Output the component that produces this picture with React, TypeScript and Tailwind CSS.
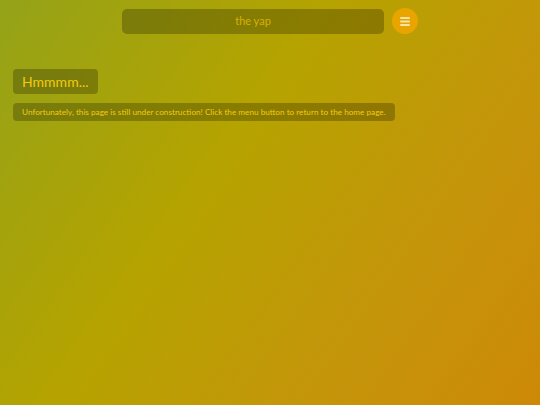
export default function App() {
  return (
    <div
      className="w-[540px] h-[405px] overflow-hidden bg-[linear-gradient(125deg,#94a318_0%,#b5a300_40%,#c4960a_70%,#cd8906_100%)]"
      style={{ fontFamily: '"Lato", "Noto Sans", sans-serif' }}
    >
      {/* Top bar */}
      <div className="flex items-center pt-[8px] pl-[122px] gap-[8px]">
        <div className="w-[262px] h-[25px] rounded-[5px] bg-[#0000003d] flex items-center justify-center text-[11px] text-[#d9b000]">
          the yap
        </div>
        <button className="w-[26px] h-[26px] rounded-full bg-[#e8a500] flex items-center justify-center">
          <svg width="10" height="9" viewBox="0 0 10 9">
            <rect x="0" y="0" width="10" height="2" rx="1" fill="#f6e3a8" />
            <rect x="0" y="3.5" width="10" height="2" rx="1" fill="#f6e3a8" />
            <rect x="0" y="7" width="10" height="2" rx="1" fill="#f6e3a8" />
          </svg>
        </button>
      </div>

      {/* Content */}
      <div className="pl-[13px] pt-[35px] flex flex-col items-start gap-[9px]">
        <div className="h-[25px] px-[9px] rounded-[4px] bg-[#0000003d] flex items-center text-[14px] text-[#f2cb10]">
          Hmmmm...
        </div>
        <div className="h-[18px] px-[9px] rounded-[4px] bg-[#0000003d] flex items-center text-[8.2px] text-[#f2cb10]">
          Unfortunately, this page is still under construction! Click the menu button to return to the home page.
        </div>
      </div>
    </div>
  );
}
